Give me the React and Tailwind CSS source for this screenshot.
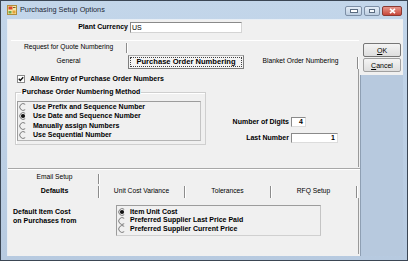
import React from 'react';

const font = "font-['Liberation_Sans',Arial,sans-serif]";

function AppIcon() {
  return (
    <svg width="10" height="10" viewBox="0 0 10 10" className="shrink-0">
      <rect x="0.5" y="0.5" width="9" height="9" fill="#f6e7a8" stroke="#b08d3a" />
      <rect x="1.5" y="1.5" width="4" height="3" fill="#d9472b" />
      <rect x="6" y="2" width="2.5" height="1" fill="#7a5a2a" />
      <rect x="1.5" y="6" width="3" height="2.5" fill="#6fa84a" />
      <rect x="5.5" y="5.5" width="3" height="3" fill="#e3a23a" />
    </svg>
  );
}

function WinButtons() {
  return (
    <div className="ml-auto flex items-center gap-[2px] mt-[2px]">
      <div className="w-[17px] h-[10px] rounded-[2px] border border-[#7d8fa6] bg-gradient-to-b from-[#e4edf7] to-[#bccde0] flex items-end justify-center pb-[2px]">
        <span className="w-[6px] h-[2px] bg-white border border-[#5a6b80] box-content" />
      </div>
      <div className="w-[16px] h-[10px] rounded-[2px] border border-[#7d8fa6] bg-gradient-to-b from-[#e4edf7] to-[#bccde0] flex items-center justify-center">
        <span className="w-[6px] h-[4px] border border-[#5a6b80] bg-[#f4f8fc]" />
      </div>
      <div className="w-[20px] h-[10px] rounded-[2px] border border-[#8a3a32] bg-gradient-to-b from-[#e6968c] to-[#c7463a] flex items-center justify-center">
        <svg width="7" height="6" viewBox="0 0 7 6">
          <path d="M1 0.8 L6 5.2 M6 0.8 L1 5.2" stroke="#fff" strokeWidth="1.6" />
        </svg>
      </div>
    </div>
  );
}

function Radio({ checked }) {
  return (
    <svg width="8" height="8" viewBox="0 0 8 8" className="shrink-0">
      <path d="M6.2 1.3 A3.4 3.4 0 1 0 6.2 6.7" stroke="#7c7c7c" strokeWidth="1" fill="none" />
      {checked && <circle cx="4" cy="4" r="2.1" fill="#111" />}
    </svg>
  );
}

function Check() {
  return (
    <svg width="8" height="8" viewBox="0 0 8 8" className="shrink-0">
      <rect x="0.5" y="0.5" width="7" height="7" fill="#fff" stroke="#8a8a8a" />
      <path d="M1.8 3.8 L3.3 5.4 L6.2 2.2" stroke="#111" strokeWidth="1.4" fill="none" />
    </svg>
  );
}

function Sep({ h = 'h-[10px]' }) {
  return <i className={`w-px ${h} self-end bg-[#8c8c8c] shadow-[1px_0_0_#ffffff] shrink-0`} />;
}

function Tab({ w, bold, children }) {
  return (
    <div className={`${w} flex items-center justify-center shrink-0 whitespace-nowrap ${bold ? 'font-bold text-[7px]' : 'text-[6.7px]'}`}>
      {children}
    </div>
  );
}

function Field({ w, value, align = 'text-right' }) {
  return (
    <div className={`${w} h-[10px] bg-white border border-[#8a8a8a] border-r-[#dcdcdc] border-b-[#dcdcdc] text-[7px] leading-[8px] font-bold px-[2px] ${align}`}>
      {value}
    </div>
  );
}

function UpperTabs() {
  return (
    <div className="ml-[3px] mr-px mt-[7px] h-[127px] flex flex-col border-t border-white">
      <div className="h-[12px] flex shrink-0">
        <Tab w="w-[115px]">Request for Quote Numbering</Tab>
        <Sep />
      </div>
      <div className="h-[16px] flex shrink-0 items-end">
        <Tab w="w-[115px] self-stretch">General</Tab>
        <div className="ml-[2px] w-[116px] h-[14px] border border-[#7e7e7e] border-t-[#a8a8a8] bg-[#f4f4f4] p-px flex shrink-0">
          <div className="flex-1 border border-dotted border-[#404040] flex items-center justify-center font-bold text-[7.6px] whitespace-nowrap">
            Purchase Order Numbering
          </div>
        </div>
        <Tab w="w-[113px] self-stretch">Blanket Order Numbering</Tab>
        <Sep h="h-[12px]" />
      </div>
      <div className="flex-1 flex flex-col border-r border-[#9a9a9a] pr-px">
        <div className="flex items-center ml-[6px] mt-[6px] h-[8px] gap-[5px]">
          <Check />
          <span className="text-[7px] font-bold whitespace-nowrap">Allow Entry of Purchase Order Numbers</span>
        </div>
        <div className="flex mt-[5px]">
          <fieldset className="ml-[4px] w-[191px] border border-[#cfcfcf] shadow-[inset_1px_1px_0_#fff] pl-px pb-[3px]">
            <legend className="ml-[4px] px-px text-[7px] font-bold leading-[8px] whitespace-nowrap">
              Purchase Order Numbering Method
            </legend>
            <div className="mt-[5px] w-[184px] border border-[#9c9c9c] border-r-[#c4c4c4] border-b-[#b4b4b4] flex flex-col pl-[1px]">
              {[
                ['Use Prefix and Sequence Number', false],
                ['Use Date and Sequence Number', true],
                ['Manually assign Numbers', false],
                ['Use Sequential Number', false],
              ].map(([t, c]) => (
                <div key={t} className="h-[9.5px] flex items-center gap-[6px]">
                  <Radio checked={c} />
                  <span className="text-[7px] font-bold whitespace-nowrap">{t}</span>
                </div>
              ))}
            </div>
          </fieldset>
          <div className="ml-auto mr-[19px] self-end mb-[2px] grid grid-cols-[auto_47px] gap-x-[2px] gap-y-[5px] items-center">
            <span className="text-[7px] font-bold text-right whitespace-nowrap">Number of Digits</span>
            <Field w="w-[15px]" value="4" />
            <span className="text-[7px] font-bold text-right whitespace-nowrap">Last Number</span>
            <Field w="w-[47px]" value="1" />
          </div>
        </div>
      </div>
    </div>
  );
}

function LowerTabs() {
  return (
    <div className="flex-1 flex flex-col border-t border-[#a8a8a8] shadow-[inset_0_1px_0_#fff] mt-px">
      <div className="ml-[3px] mr-px mt-[2px] mb-[2px] flex-1 flex flex-col">
        <div className="h-[13px] flex shrink-0">
          <Tab w="w-[87px]">Email Setup</Tab>
          <Sep />
        </div>
        <div className="h-[14px] flex shrink-0">
          <Tab w="w-[87px]" bold>Defaults</Tab>
          <Sep h="h-[12px]" />
          <Tab w="w-[85px]">Unit Cost Variance</Tab>
          <Sep h="h-[12px]" />
          <Tab w="w-[85px]">Tolerances</Tab>
          <Sep h="h-[12px]" />
          <Tab w="w-[85px]">RFQ Setup</Tab>
          <Sep h="h-[12px]" />
        </div>
        <div className="flex-1 flex border-r border-[#9a9a9a] pt-[7px]">
          <div className="ml-[2px] w-[103px] flex flex-col pt-[3px] text-[7px] font-bold leading-[8.5px]">
            <span>Default Item Cost</span>
            <span>on Purchases from</span>
          </div>
          <div className="w-[205px] h-[31px] border border-[#9c9c9c] border-r-[#c4c4c4] border-b-[#d0d0d0] flex flex-col justify-center pl-[1px]">
            {[
              ['Item Unit Cost', true],
              ['Preferred Supplier Last Price Paid', false],
              ['Preferred Supplier Current Price', false],
            ].map(([t, c]) => (
              <div key={t} className="h-[8.5px] flex items-center gap-[4px]">
                <Radio checked={c} />
                <span className="text-[7px] font-bold whitespace-nowrap">{t}</span>
              </div>
            ))}
          </div>
        </div>
      </div>
    </div>
  );
}

function Side() {
  return (
    <div className="flex-1 flex flex-col bg-[#b7c9de]">
      <div className="bg-[#f0f0f0] pt-[23px] pb-[3px] pl-[3px] pr-[2px] flex flex-col gap-px">
        <button className="h-[14px] rounded-[2px] border border-[#767676] bg-gradient-to-b from-[#f4f4f4] to-[#dedede] text-[7px] leading-none">
          <span className="underline">O</span>K
        </button>
        <button className="h-[14px] rounded-[2px] border border-[#a0a0a0] bg-gradient-to-b from-[#f4f4f4] to-[#dedede] text-[7px] leading-none">
          <span className="underline">C</span>ancel
        </button>
      </div>
      <div className="flex-1 border-l border-[#8e9fb3]" />
    </div>
  );
}

export default function App() {
  return (
    <div className={`w-[408px] h-[261px] bg-[#3b4654] p-px ${font} text-black select-none`}>
      <div className="h-full flex flex-col bg-gradient-to-b from-[#c3d6ea] to-[#b7cae0]">
        <div className="h-[18px] flex items-center pl-[6px] pr-[5px] shrink-0">
          <AppIcon />
          <span className="ml-[3px] text-[7.3px] text-[#1c2736]">Purchasing Setup Options</span>
          <WinButtons />
        </div>
        <div className="flex-1 flex ml-[6px] mr-[4px] mb-[4px] min-h-0 border-l border-t border-[#e8eef5]">
          <div className="w-[352px] bg-[#f0f0f0] flex flex-col">
            <div className="mt-[2px] h-[11px] flex items-center">
              <span className="w-[120px] text-right text-[7px] font-bold whitespace-nowrap">Plant Currency</span>
              <div className="ml-[2px] w-[112px] h-[11px] bg-white border border-[#8a8a8a] border-r-[#d4d4d4] border-b-[#d4d4d4] text-[7px] leading-[9px] pl-px">US</div>
            </div>
            <UpperTabs />
            <LowerTabs />
          </div>
          <Side />
        </div>
      </div>
    </div>
  );
}
